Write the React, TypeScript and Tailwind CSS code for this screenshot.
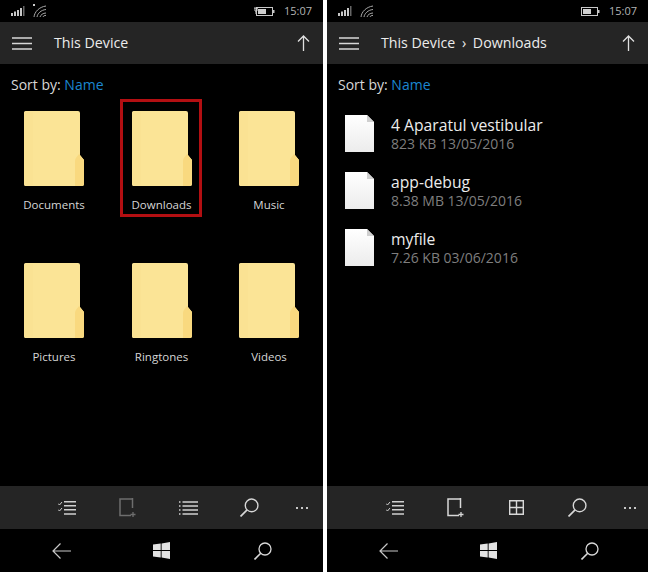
import React from "react";

function Signal() {
  return (
    <svg width="14" height="10" viewBox="0 0 14 10" fill="#c8c8c8">
      <rect x="0" y="7" width="2" height="3" />
      <rect x="3" y="5.5" width="2" height="4.5" />
      <rect x="6" y="4" width="2" height="6" />
      <rect x="9" y="2" width="2" height="8" />
      <rect x="12" y="0" width="1.5" height="10" fill="#666" />
    </svg>
  );
}

function Wifi({ star }: { star?: boolean }) {
  return (
    <svg width="14" height="14" viewBox="0 0 14 14" fill="none" stroke="#a8a8a8" strokeWidth="1">
      {star && <rect x="0" y="0" width="2" height="2" fill="#ccc" stroke="none" />}
      <path d="M1 13C1.5 8 6 3 13 2" />
      <path d="M4 13C4.5 9.5 8 6 13 5.5" />
      <path d="M7 13C7.5 11 10 9 13 9" />
      <path d="M10 13c.3-1 1.5-1.6 3-1.6" />
    </svg>
  );
}

function Battery({ plug }: { plug?: boolean }) {
  return (
    <svg width={plug ? 21 : 19} height="9" viewBox={plug ? "0 0 21 9" : "0 0 19 9"} fill="none">
      <g transform={plug ? "translate(2 0)" : ""}>
        <rect x="0.5" y="0.5" width="16" height="8" stroke="#c8c8c8" />
        <rect x="2" y="2" width="8" height="5" fill="#d0d0d0" />
        <rect x="17" y="3" width="1.5" height="3" fill="#c8c8c8" />
      </g>
      {plug && <path d="M0 1h4M1 1v3h2V1M2 4v3" stroke="#d0d0d0" />}
    </svg>
  );
}

function Hamburger() {
  return (
    <svg width="20" height="13" viewBox="0 0 20 13" stroke="#d8d8d8" strokeWidth="1.5">
      <path d="M0 1h20M0 6.5h20M0 12h20" />
    </svg>
  );
}

function UpArrow() {
  return (
    <svg width="13" height="16" viewBox="0 0 13 16" fill="none" stroke="#e0e0e0" strokeWidth="1.3">
      <path d="M6.5 16V1M1 6.5l5.5-5.5L12 6.5" />
    </svg>
  );
}

function Folder() {
  return (
    <svg width="60" height="75" viewBox="0 0 60 75">
      <path d="M1.5 0H54a2 2 0 0 1 2 2V44l4 5v24a2 2 0 0 1-2 2H1.5A1.5 1.5 0 0 1 0 73.5V1.5A1.5 1.5 0 0 1 1.5 0Z" fill="#fbe496" />
      <rect x="0" y="1" width="9" height="73" fill="#f8dc88" opacity="0.2" />
      <path d="M51 75V50c0-2 1-3 2-4.500l2-2.500 5 6v24a2 2 0 0 1-2 2Z" fill="#f9d97f" />
    </svg>
  );
}

function FileIcon() {
  return (
    <svg width="29" height="37" viewBox="0 0 29 37">
      <defs>
        <linearGradient id="pg" x1="0" y1="0" x2="0" y2="1">
          <stop offset="0" stopColor="#ffffff" />
          <stop offset="1" stopColor="#ececec" />
        </linearGradient>
      </defs>
      <path d="M0 0H22L29 7V37H0Z" fill="url(#pg)" />
      <path d="M22 0L29 7H22Z" fill="#cfcfcf" />
    </svg>
  );
}

function Checklist() {
  return (
    <svg width="18" height="14" viewBox="0 0 18 14" fill="none" stroke="#d0d0d0">
      <path d="M0 2.500l1.500 1.500L4 1M0 8.500l1.500 1.500L4 7" strokeWidth="1" />
      <path d="M6 .7h12M6 4.700h12M6 8.700h12M6 13h12" strokeWidth="1.4" />
    </svg>
  );
}

function NewFolder({ dim }: { dim?: boolean }) {
  const c = dim ? "#6e6e6e" : "#d8d8d8";
  return (
    <svg width="17" height="19" viewBox="0 0 17 19" fill="none" stroke={c} strokeWidth="1.500">
      <path d="M13.500 1H1v16.500h11" />
      <path d="M13.500 0v10" />
      <path d="M14 14v5M11.500 16.500h5" strokeWidth="1.300" />
    </svg>
  );
}

function ListIcon() {
  return (
    <svg width="19" height="14" viewBox="0 0 19 14" fill="none" stroke="#d0d0d0" strokeWidth="1.400">
      <path d="M0 1h1.500M0 5h1.500M0 9h1.500M0 13h1.500" />
      <path d="M3.500 1H19M3.500 5H19M3.500 9H19M3.500 13H19" />
    </svg>
  );
}

function GridIcon() {
  return (
    <svg width="15" height="15" viewBox="0 0 15 15" fill="none" stroke="#d8d8d8" strokeWidth="1.400">
      <path d="M.7.7h13.600v13.600H.7zM7.500.7v13.600M.7 7.500h13.600" />
    </svg>
  );
}

function SearchIcon({ size = 18 }: { size?: number }) {
  return (
    <svg width={size} height={size} viewBox="0 0 18 18" fill="none" stroke="#d8d8d8" strokeWidth="1.300">
      <circle cx="11" cy="7" r="6" />
      <path d="M6.700 11.300L.5 17.500" strokeWidth="1.600" />
    </svg>
  );
}

function BackArrow() {
  return (
    <svg width="19" height="16" viewBox="0 0 19 16" fill="none" stroke="#c8c8c8" strokeWidth="1.200">
      <path d="M19 8H1M8.500.5L1 8l7.500 7.500" />
    </svg>
  );
}

function WinLogo() {
  return (
    <svg width="17" height="17" viewBox="0 0 17 17" fill="#e2e2e2">
      <path d="M0 2.600L7.700 1.500V8H0ZM8.600 1.400L17 0V8H8.600ZM0 9H7.700V15.500L0 14.400ZM8.600 9H17V17L8.600 15.600Z" />
    </svg>
  );
}

const Dots = () => (
  <div className="flex gap-[3px]">
    <span className="w-[2px] h-[2px] bg-[#c8c8c8]" />
    <span className="w-[2px] h-[2px] bg-[#c8c8c8]" />
    <span className="w-[2px] h-[2px] bg-[#c8c8c8]" />
  </div>
);

function Phone({
  width,
  toolPad,
  title,
  plug,
  star,
  tools,
  children,
}: {
  width: string;
  toolPad: string;
  title: React.ReactNode;
  plug?: boolean;
  star?: boolean;
  tools: React.ReactNode[];
  children: React.ReactNode;
}) {
  return (
    <div className={`${width} h-[572px] bg-black flex flex-col shrink-0`}>
      <div className="h-[22px] flex items-center pl-[11px] pr-[11px] text-[11px] text-[#b4b4b4]">
        <Signal />
        <span className="ml-[8px]">
          <Wifi star={star} />
        </span>
        <span className="ml-auto">
          <Battery plug={plug} />
        </span>
        <span className="ml-[9px]">15:07</span>
      </div>
      <div className="h-[42px] bg-[#252525] flex items-center pl-[12px] pr-[13px]">
        <Hamburger />
        <div className="ml-[22px] text-[14.2px] font-medium text-[#ececec]">{title}</div>
        <span className="ml-auto">
          <UpArrow />
        </span>
      </div>
      <div className="pl-[11px] pt-[11px] h-[34px] text-[14px] leading-[20px] text-[#d8d8d8]">
        Sort by: <span className="text-[#1b87d0]">Name</span>
      </div>
      <div className="flex-1">{children}</div>
      <div className={`h-[43px] bg-[#252525] grid grid-cols-[61px_61px_61px_61px_43px] ${toolPad} items-center justify-items-center`}>
        {tools.map((t, i) => (
          <div key={i} className="flex items-center justify-center">
            {t}
          </div>
        ))}
      </div>
      <div className="h-[43px] grid grid-cols-[100px_101px_101px] pl-[11px] items-center justify-items-center">
        <BackArrow />
        <WinLogo />
        <SearchIcon />
      </div>
    </div>
  );
}

function FolderCell({ name, selected }: { name: string; selected?: boolean }) {
  return (
    <div className="relative flex flex-col items-center pt-[13px]">
      {selected && (
        <div className="absolute top-[1px] left-[12px] w-[82px] h-[118px] border-[3px] border-[#b30f12]" />
      )}
      <Folder />
      <div className="mt-[11px] text-[11.5px] leading-[16px] text-[#d6d6d6]">{name}</div>
    </div>
  );
}

function FileRow({ name, meta }: { name: string; meta: string }) {
  return (
    <div className="h-[57px] flex items-center pl-[18px]">
      <FileIcon />
      <div className="ml-[17px]">
        <div className="text-[15.7px] leading-[20px] text-[#ececec]">{name}</div>
        <div className="text-[14px] leading-[18px] text-[#7e7e7e]">{meta}</div>
      </div>
    </div>
  );
}

export default function App() {
  return (
    <div className="w-[648px] h-[572px] bg-white flex gap-[4px] overflow-hidden font-['Open_Sans','Noto_Sans',sans-serif]">
      <Phone
        width="w-[323px]"
        toolPad="pl-[36px]"
        title="This Device"
        plug
        star
        tools={[<Checklist />, <NewFolder dim />, <ListIcon />, <SearchIcon size={19} />, <Dots />]}
      >
        <div className="grid grid-cols-[108px_107px_108px] grid-rows-[152px_120px]">
          {["Documents", "Downloads", "Music", "Pictures", "Ringtones", "Videos"].map((n) => (
            <FolderCell key={n} name={n} selected={n === "Downloads"} />
          ))}
        </div>
      </Phone>
      <Phone
        width="w-[321px]"
        toolPad="pl-[37px]"
        title={
          <span>
            This Device <span className="mx-[3px]">›</span> Downloads
          </span>
        }
        tools={[<Checklist />, <NewFolder />, <GridIcon />, <SearchIcon size={19} />, <Dots />]}
      >
        <div className="pt-[7px]">
          <FileRow name="4 Aparatul vestibular" meta="823 KB 13/05/2016" />
          <FileRow name="app-debug" meta="8.38 MB 13/05/2016" />
          <FileRow name="myfile" meta="7.26 KB 03/06/2016" />
        </div>
      </Phone>
    </div>
  );
}
